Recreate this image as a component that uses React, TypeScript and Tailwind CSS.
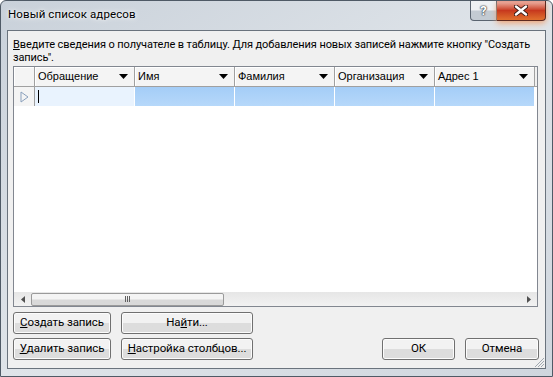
import type { ReactNode } from "react";

const UI_FONT = "font-['Segoe_UI',Roboto,sans-serif]";
const GRID_FONT = "font-['Liberation_Sans',Arial,sans-serif]";

const COLUMNS = ["Обращение", "Имя", "Фамилия", "Организация", "Адрес 1"];

function DialogButton({
  children,
  className = "",
}: {
  children: ReactNode;
  className?: string;
}) {
  return (
    <button
      type="button"
      className={`flex h-[22px] items-center justify-center rounded-[3px] border border-[#707070] bg-gradient-to-b from-[#f2f2f2] from-50% to-[#dddddd] to-50% text-[11.5px] leading-none tracking-[-0.1px] text-black shadow-[inset_0_0_0_1px_#fcfcfc] ${className}`}
    >
      {children}
    </button>
  );
}

function HeaderCell({ label }: { label: string }) {
  return (
    <div className="flex h-full w-[100px] shrink-0 items-center justify-between border-r border-[#a0a0a0] bg-[#f4f4f4] pl-[3px] pr-[6px] shadow-[inset_1px_1px_0_#ffffff]">
      <span className="text-[11px] text-black">{label}</span>
      <svg width="9" height="5" viewBox="0 0 9 5">
        <path d="M0 0h9L4.5 5z" fill="#000" />
      </svg>
    </div>
  );
}

export default function App() {
  return (
    <div
      className={`relative flex h-[377px] w-[553px] flex-col overflow-hidden rounded-t-[6px] border border-[#4f5a66] bg-gradient-to-br from-[#c9d1da] via-[#dfe4e9] to-[#cfd6de] ${UI_FONT}`}
    >
      {/* title bar */}
      <div className="flex h-[29px] shrink-0 items-start justify-between">
        <span className="pl-[7px] pt-[5px] text-[11.5px] tracking-[0.1px] text-black [text-shadow:0_0_6px_#ffffff,0_0_3px_#ffffff]">
          Новый список адресов
        </span>
        <div className="mr-[6px] flex">
          <div className="flex h-[20px] w-[27px] items-center justify-center rounded-bl-[4px] border border-t-0 border-[#5a6470] bg-gradient-to-b from-[#eef1f4] from-45% to-[#c3cbd3] to-55%">
            <span className="text-[13px] font-bold leading-none text-white [text-shadow:0_0_1px_#3a3f46,0_0_1px_#3a3f46,0_0_2px_#3a3f46]">
              ?
            </span>
          </div>
          <div className="flex h-[20px] w-[49px] items-center justify-center rounded-br-[4px] border border-l-0 border-t-0 border-[#5e2a20] bg-gradient-to-b from-[#e7a091] from-10% via-[#c7381e] via-50% to-[#e0702e] shadow-[0_2px_6px_#f0a070]">
            <svg width="14" height="11" viewBox="0 0 14 11">
              <path
                d="M2 1.5L12 9.5M12 1.5L2 9.5"
                stroke="#3a1a14"
                strokeWidth="4.2"
                strokeLinecap="round"
              />
              <path
                d="M2 1.5L12 9.5M12 1.5L2 9.5"
                stroke="#ffffff"
                strokeWidth="2.4"
                strokeLinecap="round"
              />
            </svg>
          </div>
        </div>
      </div>

      {/* client area */}
      <div className="mx-[6px] mb-[7px] flex flex-1 flex-col border border-[#6a737d] bg-[#f0f0f0] px-[5px] pt-[7px] pb-[7px]">
        <p className="whitespace-nowrap text-[11px] leading-[13px] tracking-[-0.1px] text-black">
          <span className="underline">В</span>ведите сведения о получателе в таблицу. Для добавления новых записей нажмите кнопку "Создать
          <br />
          запись".
        </p>

        {/* grid */}
        <div className={`mt-[2px] flex h-[241px] w-[525px] flex-col border border-[#828790] bg-white ${GRID_FONT}`}>
          <div className="flex h-[20px] shrink-0 border-b border-[#a0a0a0] bg-[#f0f0f0]">
            <div className="h-full w-[21px] shrink-0 border-r border-[#a0a0a0] bg-[#f4f4f4] shadow-[inset_1px_1px_0_#ffffff]" />
            {COLUMNS.map((c) => (
              <HeaderCell key={c} label={c} />
            ))}
          </div>
          <div className="flex h-[19px] shrink-0">
            <div className="flex h-full w-[21px] shrink-0 items-center justify-center border-r border-[#a0a0a0] bg-[#f4f4f4]">
              <svg width="9" height="12" viewBox="0 0 9 12">
                <path d="M1 1L8 6L1 11z" fill="none" stroke="#8aa0bc" />
              </svg>
            </div>
            <div className="flex h-full w-[100px] shrink-0 items-center border-r border-white bg-[#e9f3fe] pl-[3px]">
              <span className="h-[13px] w-px bg-black" />
            </div>
            {COLUMNS.slice(1).map((c) => (
              <div
                key={c}
                className="h-full w-[100px] shrink-0 border-r border-white bg-gradient-to-b from-[#a4cdf7] to-[#b6d8fa]"
              />
            ))}
          </div>
          <div className="flex-1" />

          {/* horizontal scrollbar */}
          <div className="flex h-[14px] shrink-0 items-center bg-gradient-to-b from-[#e6e6e6] to-[#f2f2f2]">
            <div className="flex w-[17px] shrink-0 justify-center">
              <svg width="4" height="7" viewBox="0 0 4 7">
                <path d="M4 0v7L0 3.5z" fill="#505050" />
              </svg>
            </div>
            <div className="flex h-[13px] w-[193px] items-center justify-center rounded-[2px] border border-[#9a9a9a] bg-gradient-to-b from-[#f4f4f4] from-45% to-[#d9d9d9] to-55%">
              <div className="flex gap-[1px]">
                <span className="h-[6px] w-px bg-[#606060]" />
                <span className="h-[6px] w-px bg-[#606060]" />
                <span className="h-[6px] w-px bg-[#606060]" />
              </div>
            </div>
            <div className="flex-1" />
            <div className="flex w-[17px] shrink-0 justify-center">
              <svg width="4" height="7" viewBox="0 0 4 7">
                <path d="M0 0v7L4 3.5z" fill="#505050" />
              </svg>
            </div>
          </div>
        </div>

        {/* buttons */}
        <div className="mt-[5px] flex gap-[10px]">
          <div className="flex flex-col gap-[4px]">
            <DialogButton className="w-[98px]">
              <span className="underline">С</span>оздать запись
            </DialogButton>
            <DialogButton className="w-[98px]">
              <span className="underline">У</span>далить запись
            </DialogButton>
          </div>
          <div className="flex flex-col gap-[4px]">
            <DialogButton className="w-[132px]">
              На<span className="underline">й</span>ти...
            </DialogButton>
            <DialogButton className="w-[132px]">
              <span className="underline">Н</span>астройка столбцов...
            </DialogButton>
          </div>
          <div className="flex flex-1 items-end justify-end gap-[10px] pr-[1px]">
            <DialogButton className="w-[73px]">ОК</DialogButton>
            <DialogButton className="w-[74px]">Отмена</DialogButton>
          </div>
        </div>
      </div>

      {/* size grip */}
      <svg className="absolute bottom-[9px] right-[8px]" width="10" height="10" viewBox="0 0 10 10">
        <path d="M10 1L1 10M10 4L4 10M10 7L7 10" stroke="#a0a8b0" strokeWidth="1" />
      </svg>
    </div>
  );
}
